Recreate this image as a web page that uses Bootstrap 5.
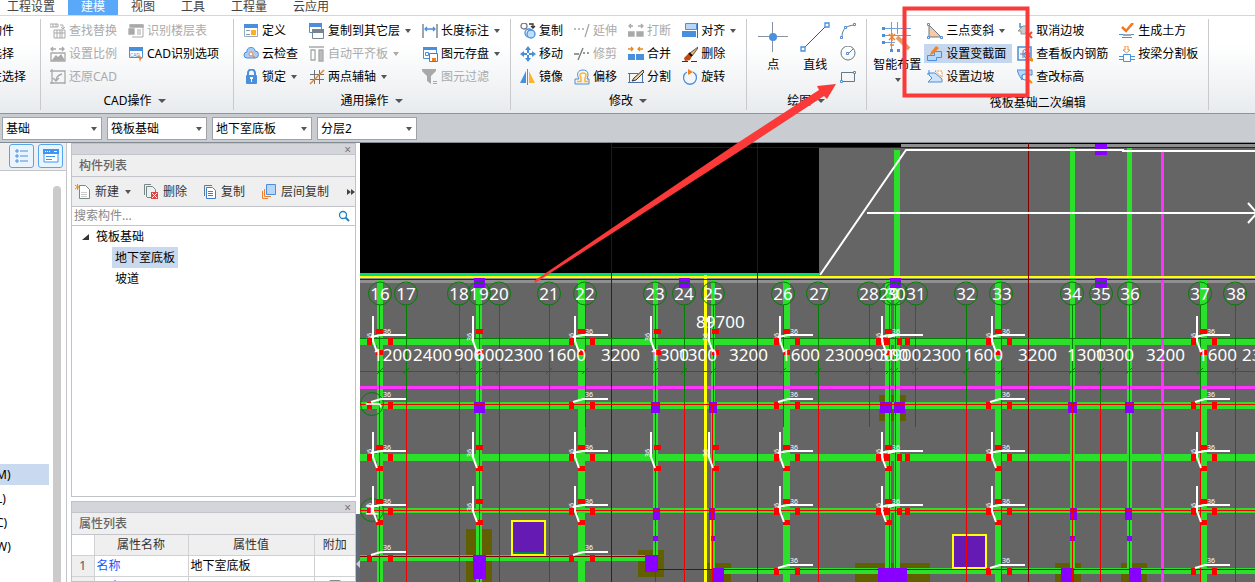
<!DOCTYPE html>
<html lang="zh-CN">
<head>
<meta charset="utf-8">
<meta name="viewport" content="width=device-width, initial-scale=1">
<title>建模</title>
<link href="https://cdn.jsdelivr.net/npm/bootstrap@5.3.0/dist/css/bootstrap.min.css" rel="stylesheet">
<script src="https://cdn.jsdelivr.net/npm/bootstrap@5.3.0/dist/js/bootstrap.bundle.min.js"></script>
<style>
body{font-family:"Noto Sans","Noto Sans CJK SC",sans-serif;font-size:12px;line-height:16px;color:#000;background:#fff;height:100vh;overflow:hidden}
button{font:inherit;color:inherit;background:none;border:0;padding:0;white-space:nowrap}
svg{display:block;flex:none}
.tabs{height:16px;margin:0;border-bottom:1px solid #d4d6d8;padding-left:0}
.tabs a{display:block;height:15px;line-height:13px;padding:0 13px;color:#444;text-decoration:none;white-space:nowrap}
.tabs a:first-child{margin-left:-6px}
.tabs a.on{background:#5aa9f8;color:#fff}
.ribbon{height:98px;background:linear-gradient(#fff 30%,#e8ebee);border-bottom:1px solid #8f959a;padding:3px 0}
.grp{border-right:1px solid #c8cacd;padding:0 10px 0 9px;flex:none}
.grp .cols{gap:11px;height:73px}
.cmd{display:flex;align-items:center;height:23px;gap:3px;text-align:left}
.cmd:disabled{color:#aaa}
.cmd.sel{background:#c5d7ef;height:19px;margin:2px 0;box-shadow:-3px 0 #c5d7ef,6px 0 #c5d7ef}
.car:after{content:"";display:inline-block;border:3px solid transparent;border-top:4px solid #555;border-bottom:0;margin-left:2px;vertical-align:2px;flex:none}
.cmd:disabled.car:after{border-top-color:#aaa}
.cap{text-align:center;line-height:17px;white-space:nowrap}
.cap.car:after{border-width:4px 4px 0;margin-left:6px}
.big{display:flex;flex-direction:column;align-items:center;height:70px;padding-top:3px;gap:5px}
.filters{height:29px;background:#c9cdd2;border-bottom:1px solid #858b92;padding:3px 2px;gap:5px}
.filters select{width:100px;height:23px;border:1px solid #9fa3a7;border-radius:0;font:inherit;padding:0 3px;appearance:none;color:#000;background:#fff url("data:image/svg+xml,%3Csvg xmlns='http://www.w3.org/2000/svg' width='6' height='4'%3E%3Cpath d='M0 0h6L3 4z' fill='%23555'/%3E%3C/svg%3E") no-repeat right 4px center}
.side{width:67px;flex:none;border-right:1px solid #c3c6cb;background:#fff}
.sidehead{height:28px;background:#efefef;border-bottom:1px solid #c3c6cb;padding:1px 0 0 9px;gap:4px}
.sidehead button{width:25px;height:24px;border:1px solid #55a5ee;border-radius:3px;background:#e9f4ff;display:grid;place-items:center}
.keys{width:49px;padding-top:293px}
.keys div{height:24px;line-height:22px;overflow:hidden}
.keys span{margin-left:-4px}
.keys .hl{height:21px;background:#c9daf0;margin-bottom:3px}
.sbar{width:8px;background:#cbcbcb;margin:15px 5px 0 4px;border-radius:4px 4px 0 0}
.panels{width:285px;flex:none;margin-left:4px}
.pnl{border:1px solid #c0c2ca;background:#fff}
.pnl.upper{flex:0 0 354px}
.pnl.lower{margin-top:4px}
.grip{height:11px;background:#d4d5db;border-bottom:1px solid #c3c5ca;text-align:right;padding-right:4px}
.grip button{display:block;margin-left:auto;line-height:9px;height:10px;color:#777}
.ttl{height:22px;line-height:21px;background:#efefef;border-bottom:1px solid #c3c5ca;padding-left:7px;color:#666;font-size:12px;font-weight:500;margin:0}
.tools{height:30px;background:#efefef;border-bottom:1px solid #c3c5ca;color:#333;padding-left:3px;gap:16px}
.tools .cmd{height:29px;gap:4px}
.tools .car{margin-right:-4px}
.find{height:19px;border-bottom:1px solid #c3c5ca;padding-right:5px}
.find input{border:0;outline:0;padding:0 2px;font:inherit;min-width:0}
.find input::placeholder{color:#888;opacity:1}
.tree{list-style:none;margin:0;padding:0 0 0 9px}
.tree ul{list-style:none;padding:0 0 0 31px;margin:0}
.tree li{line-height:21px}
.tree .pick{display:inline-block;padding:0 3px}
.tree .pick.hl{background:#c9daf0}
.props{width:100%;table-layout:fixed;border-collapse:collapse}
.props th{background:#efefef;border:1px solid #cfd1d4;border-top:0;height:20px;font-weight:400;text-align:center;padding:0;color:#333}
.props td{border:1px solid #cfd1d4;height:21px;padding:0 2px}
.props tr>:first-child{background:#efefef;text-align:center;color:#555;border-left:0}
.props tr>:last-child{border-right:0}
.props thead th:first-child{background:#fff}
.props td.key{color:#1455ff}
.props input{appearance:none;width:14px;height:14px;border:1px solid #888;border-radius:3px;display:block;margin:0 auto}
.gutter{width:4px;flex:none}
.gutter div{background:#5f6b76;margin-top:371px;height:100%}
.marks{position:absolute;left:0;top:0;pointer-events:none}
.i{fill:none;stroke:#4a8fdc;stroke-width:1.3}
.g{fill:none;stroke:#a9a9a9;stroke-width:1.3}
.ax{font-size:17px;fill:#fff}
.axc{text-anchor:middle}
.tiny{font-size:7px;fill:#fff}
.edge{width:41px;padding:0}
.edge div{margin-left:-10px}
#cad{padding-right:14px}
#draw .cols{gap:10px}
#draw .big:first-child{width:34px}
#raft{padding-left:6px}
#raft .cols{gap:11px}
#raft .big{margin-right:-5px}
#raft .big .car{line-height:4px}
#raft .cap{padding:2px 0 0 4px}
</style>
</head>
<body class="d-flex flex-column">
<nav class="tabs d-flex"><a href="#">工程设置</a><a href="#" class="on">建模</a><a href="#">视图</a><a href="#">工具</a><a href="#">工程量</a><a href="#">云应用</a></nav>

<div class="ribbon d-flex">
 <section class="grp edge"><div>
  <button class="cmd">构件</button><button class="cmd">选择</button><button class="cmd">性选择</button></div></section>

 <section class="grp" id="cad"><div class="cols d-flex">
  <div>
   <button class="cmd" disabled><svg width="16" height="16" class="g"><path d="M0 1h8v3H0zM3 1v3M6 1v3M10 2h3v3M11 4l2 2 2-2M4 7h11v8H4zM7 7v8M10 7v8M12 7v8M4 10h11" stroke-width="1"/></svg>查找替换</button>
   <button class="cmd" disabled><svg width="16" height="16" class="g"><path d="M1 3h5M9 3h5M3 1L1 3l2 2M12 1l2 2-2 2M1 7h14v8H1z"/><path fill="#a9a9a9" d="M3 14l3-4 2 2 3-3 3 5z"/></svg>设置比例</button>
   <button class="cmd" disabled><svg width="16" height="16" class="g"><path d="M2 0v15M0 2h15v13M0 14h15M3 9l3 3 3-3M6 12C6 8 8 6 12 5"/></svg>还原CAD</button>
  </div><div>
   <button class="cmd" disabled><svg width="16" height="16" class="g"><path d="M2 2h13v12H4M9 7h4M9 9h4M9 11h4" stroke-width="1"/><path d="M2 2h13v2H2zM1 6h5v5H1z" fill="#a9a9a9"/></svg>识别楼层表</button>
   <button class="cmd"><svg width="16" height="16"><path d="M1.500 2.500h13v9h-13z" fill="#fff" stroke="#4a8fdc"/><path d="M1 1h14v4H1z" fill="#4a8fdc"/><text x="2" y="11" font-size="5" fill="#4a8fdc">CAD</text><path d="M10 9l5 3-2 1-1 3z" fill="#f08040"/></svg>CAD识别选项</button>
  </div></div><div class="cap car">CAD操作</div></section>

 <section class="grp" id="gen"><div class="cols d-flex">
  <div>
   <button class="cmd"><svg width="16" height="16"><path d="M1.500 2.500h13v11h-13z" fill="#fff" stroke="#9ab"/><path d="M1 1h14v4H1z" fill="#4a8fdc"/><path d="M3 7.500h4M3 11.500h4" stroke="#89a"/><path d="M8 7h5v5H8z" fill="#ffb020"/></svg>定义</button>
   <button class="cmd"><svg width="16" height="16"><path d="M4 12a3 3 0 010-6 4 4 0 018-1 3.500 3.500 0 010 7z" fill="#a9cdf5" stroke="#4a8fdc"/><circle cx="8" cy="8" r="2" fill="#fff" stroke="#e88040"/><path d="M10 10l2 2" stroke="#e88040" stroke-width="1.500"/></svg>云检查</button>
   <button class="cmd car"><svg width="16" height="16"><path d="M5 7V4a3 3 0 017 0v3" fill="none" stroke="#4a8fdc" stroke-width="2"/><rect x="3" y="6" width="11" height="9" rx="1" fill="#4a8fdc"/><path d="M7 8h3v2H9v3H8v-3H7z" fill="#fff"/></svg>锁定</button>
  </div><div>
   <button class="cmd car"><svg width="16" height="16"><path d="M.500 1.500h12v8h-12z" fill="#fff" stroke="#4a8fdc"/><path d="M0 0h13v4H0z" fill="#4a8fdc"/><path d="M3.500 7.500h11v8h-11z" fill="#fff" stroke="#78848e"/><path d="M3 6h12v4H3z" fill="#78848e"/></svg>复制到其它层</button>
   <button class="cmd car" disabled><svg width="16" height="16" class="g"><path d="M0 1h15M2 4h4v10H2z"/><path d="M10 4h4v11h-4z" fill="#bbb"/></svg>自动平齐板</button>
   <button class="cmd car"><svg width="16" height="16" fill="none" stroke="#6b7680"><path d="M5.500 1v14M10.500 1v14M1 5.500h14M1 10.500h14"/><path d="M1 15L15 1" stroke="#f08020" stroke-width="1.500"/></svg>两点辅轴</button>
  </div><div>
   <button class="cmd car"><svg width="16" height="16" class="i"><path d="M1 1v14M15 1v14" stroke="#6b7680"/><path d="M3 6h10M5 4L3 6l2 2M11 4l2 2-2 2"/></svg>长度标注</button>
   <button class="cmd car"><svg width="16" height="16"><path d="M1.500 2.500h13v10h-13z" fill="#fff" stroke="#4a8fdc"/><path d="M1 1h14v3H1z" fill="#4a8fdc"/><path d="M3.500 6.500h3v3h-3z" fill="none" stroke="#4a8fdc"/><path d="M7.500 7.500h8v8h-8z" fill="#fff" stroke="#4a7fbc"/><path d="M10 12h4v3h-4z" fill="#f08020"/></svg>图元存盘</button>
   <button class="cmd" disabled><svg width="16" height="16"><path d="M0 0h14v2L9 7v8l-4-3V7L0 2zM11 12h4v1h-4zM11 14h4v1h-4z" fill="#a9a9a9"/></svg>图元过滤</button>
  </div></div><div class="cap car">通用操作</div></section>

 <section class="grp"><div class="cols d-flex">
  <div>
   <button class="cmd"><svg width="16" height="16" class="i"><circle cx="4" cy="3" r="3" stroke="#778"/><circle cx="9" cy="10" r="4"/><circle cx="11" cy="11" r="4" fill="#bfe0fa"/><path d="M9 1h4v3M11 3l2 2 2-2" stroke="#333"/></svg>复制</button>
   <button class="cmd"><svg width="16" height="16"><path d="M8 0l3 4H9v3H7V4H5zM8 16l3-4H9V9H7v3H5zM0 8l4-3v2h3v2H4v2zM16 8l-4-3v2H9v2h3v2z" fill="#4a8fdc"/></svg>移动</button>
   <button class="cmd"><svg width="16" height="16"><path d="M6 2v12H0z" fill="#4a8fdc"/><path d="M9 2v12h6z" fill="#ffb52a"/><path d="M7.500 0v16" stroke="#789"/></svg>镜像</button>
  </div><div>
   <button class="cmd" disabled><svg width="16" height="16" class="g"><path d="M0 6h2M4 6h2M8 6h2M15 1l-4 13"/></svg>延伸</button>
   <button class="cmd" disabled><svg width="16" height="16" class="g"><path d="M0 8h5M9 2L4 14M9 7h2M13 7h2" stroke="#777"/></svg>修剪</button>
   <button class="cmd"><svg width="16" height="16" class="i"><path d="M1 15v-5h4C2 5 4 1 9 1s6 4 4 9h2v5z" stroke-width="1"/><path d="M3 12.500h4V9C5 6 6 4 9 4s4 2 2 5v3.500h4" stroke="#ffb52a" stroke-width="1.500"/></svg>偏移</button>
  </div><div>
   <button class="cmd" disabled><svg width="16" height="16" class="g"><path d="M1 3h4M3 1L1 3l2 2M10 3h5M13 1l2 2-2 2"/><path d="M0 9h6v4H0zM9 9h6v4H9z" fill="#a9a9a9"/></svg>打断</button>
   <button class="cmd"><svg width="16" height="16"><path d="M0 3h5M3 1l2 2-2 2M15 3h-5M12 1l-2 2 2 2" fill="none" stroke="#e88820" stroke-width="1.300"/><path d="M0 8h7v6H0zM8 8h8v6H8z" fill="#4a8fdc"/></svg>合并</button>
   <button class="cmd"><svg width="16" height="16"><path d="M1.500 4v10M14.500 4v10M0 4.500h10M0 13.500h16" fill="none" stroke="#4a6fac"/><path d="M15 1L6 9l-2 3 4-1 8-8z" fill="#eed6a0" stroke="#333"/></svg>分割</button>
  </div><div>
   <button class="cmd car"><svg width="16" height="16"><path d="M3.500.500h11v6h-11z" fill="#b6d6fa" stroke="#4a8fdc"/><path d="M0 8h14v6H0z" fill="#4a8fdc"/><path d="M15.500 0v15" stroke="#567"/></svg>对齐</button>
   <button class="cmd"><svg width="16" height="16"><path d="M16 1L8 7l2 3 6-8z" fill="#d9b98a" stroke="#654"/><path d="M7 7l3 3-2 4-5 1-1-3z" fill="#c24a10"/><path d="M7 7l3 3" stroke="#111" stroke-width="2"/><path d="M0 15.500h6M9 15.500h6" stroke="#333"/></svg>删除</button>
   <button class="cmd"><svg width="16" height="16" class="i"><path d="M5 3a6.500 6.500 0 106 0"/><path d="M6 0l5 3-5 3z" fill="#f08020" stroke="none"/></svg>旋转</button>
  </div></div><div class="cap car">修改</div></section>

 <section class="grp" id="draw"><div class="cols d-flex">
   <button class="big"><svg width="30" height="30"><path d="M14.500 0v30M0 14.500h30" stroke="#8793a0"/><circle cx="15" cy="15" r="4" fill="#4a90e0"/></svg>点</button>
   <button class="big"><svg width="30" height="30"><path d="M3 27L27 3" stroke="#456"/><path d="M1 25h4v4H1zM25 1h4v4h-4z" fill="#fff" stroke="#4a8fdc" stroke-width="1.300"/></svg>直线</button>
   <div>
   <button class="cmd" aria-label="弧"><svg width="16" height="16"><path d="M2 14C2 6 6 3 14 2" fill="none" stroke="#678"/><path d="M.500 13.500h2v2h-2zM4.500 3.500h2v2h-2zM13.500.500h2v2h-2z" fill="#fff" stroke="#4a8fdc"/></svg></button>
   <button class="cmd" aria-label="圆"><svg width="16" height="16"><circle cx="8" cy="7" r="7" fill="none" stroke="#678"/><path d="M8 8l5-5" stroke="#678"/><path d="M6.500 6.500h2v2h-2z" fill="#fff" stroke="#4a8fdc"/></svg></button>
   <button class="cmd" aria-label="矩形"><svg width="16" height="16"><path d="M1.500 3.500h13v9h-13z" fill="none" stroke="#678"/><path d="M.500 11.500h2v2h-2zM13.500 2.500h2v2h-2z" fill="#fff" stroke="#4a8fdc"/></svg></button></div>
  </div><div class="cap car">绘图</div></section>

 <section class="grp" id="raft"><div class="cols d-flex">
  <button class="big"><svg width="30" height="30"><path d="M9.500 0v28M15.500 0v12M22.500 0v28M1 6.500h28M1 13.500h28M1 20.500h12" fill="none" stroke="#6f9fd8"/><path d="M0 5h3v3H0zM0 12h3v3H0zM0 19h3v3H0zM8 27h3v3H8zM15 27h3v3h-3z" fill="#4a8fdc"/><path d="M15 15l12 12" stroke="#dca070" stroke-width="4"/><path d="M7 12l6 6M13 12l-6 6M10 11v8M8 23h4M20 17h4" stroke="#f08030" stroke-width="1.500"/></svg><span>智能布置</span><span class="car"></span></button>
  <div>
   <button class="cmd car"><svg width="16" height="16"><path d="M2 2l12 12H2z" fill="#f9c9a4" stroke="#678"/><path d="M.500.500h2v2h-2zM.500 13.500h2v2h-2zM13.500 13.500h2v2h-2z" fill="#fff" stroke="#4a8fdc"/></svg>三点变斜</button>
   <button class="cmd sel"><svg width="16" height="16"><path d="M.500 9.500h7v-4h7v6h-5v3h-9z" fill="#b6d6fa" stroke="#4a8fdc"/><path d="M9 0l3 2-6 6-3 1 1-3z" fill="#f58220"/></svg>设置变截面</button>
   <button class="cmd"><svg width="16" height="16"><path d="M2 1v4H0M2 4h6l7 6v3H1l4-4-3-3z" fill="#cfe3fa" stroke="#4a8fdc"/><path d="M8 2l7 6V2z" fill="#fff" stroke="#f09030" stroke-dasharray="2 1"/></svg>设置边坡</button>
  </div><div>
   <button class="cmd"><svg width="16" height="16"><path d="M3 0v4h9" fill="none" stroke="#4a8fdc" stroke-width="1.500"/><path d="M1 8l5-5h5v8H4v-3z" fill="#ccc" stroke="#899"/><path d="M9 9l6 6M15 9l-6 6" stroke="#e05030" stroke-width="2"/></svg>取消边坡</button>
   <button class="cmd"><svg width="16" height="16"><path d="M1 1h13v13H1z" fill="#e8f3ff" stroke="#4a8fdc" stroke-width="1.500"/><path d="M3 8h6M6 12V6c0-3 3-3 3-1" fill="none" stroke="#778"/><circle cx="10" cy="9" r="3" fill="none" stroke="#4a8fdc"/><path d="M13 12l3 3" stroke="#f09000" stroke-width="3"/></svg>查看板内钢筋</button>
   <button class="cmd"><svg width="16" height="16"><path d="M0 1h15v5H5v5L2 6z" fill="#b6d6fa" stroke="#4a8fdc"/><circle cx="8" cy="8" r="3" fill="#e8f3ff" stroke="#4a8fdc"/><path d="M12 11l3 3" stroke="#f09000" stroke-width="2"/></svg>查改标高</button>
  </div><div>
   <button class="cmd"><svg width="16" height="16"><path d="M3 4l4 4 7-8" fill="none" stroke="#f07820" stroke-width="2.500"/><path d="M0 11.500h15M3 14.500h10" stroke="#4a8fdc"/><path d="M4 11h8v2H4z" fill="#9aa8b4"/></svg>生成土方</button>
   <button class="cmd"><svg width="16" height="16"><path d="M6 0h3v4h2L7.500 7 4 4h2z" fill="#fff" stroke="#f09030"/><path d="M4.500 8.500h7v7h-7zM0 10.500h4M0 13.500h4M12 10.500h4M12 13.500h4" fill="none" stroke="#4a8fdc"/></svg>按梁分割板</button>
  </div></div><div class="cap">筏板基础二次编辑</div></section>
</div>

<form class="filters d-flex">
 <select aria-label="类别"><option>基础</option></select><select aria-label="构件类型"><option>筏板基础</option></select><select aria-label="构件"><option>地下室底板</option></select><select aria-label="分层"><option>分层2</option></select>
</form>

<main class="d-flex flex-fill" style="min-height:0">
 <aside class="side d-flex flex-column">
  <div class="sidehead d-flex"><button aria-label="列表"><svg width="14" height="14" class="i"><path d="M1 1h2v2H1zM1 6h2v2H1zM1 11h2v2H1zM5 2h8M5 7h8M5 12h8" stroke-width="1"/></svg></button><button aria-label="图示"><svg width="16" height="14"><path d="M1 1h14v12H1z" fill="#fff" stroke="#3d97f2"/><path d="M0 0h16v5H0z" fill="#3d97f2"/><path d="M2 2.500h1M4 2.500h1M6 2.500h1M11 2.500h3" stroke="#fff"/><path d="M3 7.500h9M3 10.500h6" stroke="#3d97f2"/></svg></button></div>
  <div class="d-flex flex-fill"><div class="keys"><div class="hl"><span>M)</span></div><div><span>L)</span></div><div><span>C)</span></div><div><span>W)</span></div></div><div class="sbar"></div></div>
 </aside>

 <div class="panels d-flex flex-column">
  <section class="pnl upper d-flex flex-column">
   <div class="grip"><button aria-label="关闭">×</button></div>
   <h2 class="ttl">构件列表</h2>
   <div class="tools d-flex">
    <button class="cmd car"><svg width="16" height="16"><path d="M4.500 1.500h6l4 4v9h-10z" fill="#fff" stroke="#788"/><path d="M6 8.500h6M6 10.500h6M6 12.500h6" stroke="#ccc"/><path d="M0 1l5 4M5 1L0 5M2.500 0v6" stroke="#f09020"/></svg>新建</button>
    <button class="cmd"><svg width="16" height="16"><path d="M1.500 11V.500H8M3.500 13V2.500h6l3 3V9M4 13.500h4" fill="none" stroke="#788"/><path d="M8 8h7v7H8z" fill="#d84848"/><path d="M9 9l5 5M14 9l-5 5" stroke="#fff"/></svg>删除</button>
    <button class="cmd"><svg width="14" height="16"><path d="M1.500 12V1.500H9" fill="none" stroke="#678"/><path d="M3.500 3.500h6l3 3v8h-9z" fill="#fff" stroke="#3c80d0"/><path d="M5 7.500h5M5 9.500h5M5 11.500h5" stroke="#3c80d0"/></svg>复制</button>
    <button class="cmd"><svg width="16" height="16"><path d="M1.500 7v7.500H7M3.500 5v7.500H10" fill="none" stroke="#f08030"/><path d="M5.500 0.500h9v10h-9z" fill="#b6d6fa" stroke="#4a8fdc"/></svg>层间复制</button>
    <button class="cmd ms-auto" aria-label="更多"><svg width="8" height="8"><path d="M0 1l4 3-4 3zM4 1l4 3-4 3z" fill="#444"/></svg></button>
   </div>
   <div class="find d-flex align-items-center"><input class="flex-fill" type="search" aria-label="搜索构件" placeholder="搜索构件..."><svg width="12" height="12"><circle cx="5" cy="5" r="3.500" fill="none" stroke="#2080c0" stroke-width="1.300"/><path d="M7.500 7.500L11 11" stroke="#2080c0" stroke-width="2"/></svg></div>
   <ul class="tree"><li><span class="d-flex align-items-center" style="gap:7px"><svg width="8" height="8"><path d="M8 1v6H1z" fill="#333"/></svg>筏板基础</span>
    <ul><li><span class="pick hl">地下室底板</span></li><li><span class="pick">坡道</span></li></ul></li></ul>
  </section>
  <section class="pnl lower flex-fill overflow-hidden">
   <div class="grip"><button aria-label="关闭">×</button></div>
   <h2 class="ttl">属性列表</h2>
   <table class="props"><colgroup><col style="width:22px"><col style="width:94px"><col style="width:126px"><col></colgroup>
    <thead><tr><th></th><th>属性名称</th><th>属性值</th><th>附加</th></tr></thead>
    <tbody><tr><td>1</td><td class="key">名称</td><td>地下室底板</td><td></td></tr><tr><td>2</td><td class="key">厚度</td><td></td><td><input type="checkbox" aria-label="附加"></td></tr></tbody></table>
  </section>
 </div>
 <div class="gutter overflow-hidden"><div><svg width="4" height="68"><path d="M4 46v8l-4-4z" fill="#c8ced4"/></svg></div></div>

 <div class="flex-fill" style="min-width:0">
 <svg width="100%" height="100%" viewBox="360 143 895 439" preserveAspectRatio="xMinYMin slice">
  <defs>
   <circle id="bub" cy="293.500" r="11.500" fill="none" stroke="#007f00"/>
   <g id="lr"><path d="M-6 0h5v7h-5zM15 0h5v7h-5z" fill="#f00"/></g>
   <g id="half"><use href="#lr"/><path d="M-2 0L8-3H33" fill="none" stroke="#fff" stroke-width="2"/><text class="tiny" x="10" y="-5">36</text></g>
   <g id="slim"><path d="M3-9h7v5H3zM3 12h7v5H3z" fill="#f00"/><path d="M0-22V3L4 14" fill="none" stroke="#fff" stroke-width="2"/><text class="tiny" transform="translate(-1 3)rotate(-90)">36</text></g>
   <g id="full"><use href="#slim"/><use href="#lr"/><path d="M-2-1L8-3H33" fill="none" stroke="#fff" stroke-width="2"/><text class="tiny" x="10" y="-4">36</text></g>
   <path id="tk" d="M-3 374l6-6" stroke="#007f00"/>
  </defs>
  <path d="M360 143h895v439H360z" fill="#656565"/>
  <path d="M360 143h459v130H360zM360 143h541v5H360zM901 143h354v1H901z"/>
  <path d="M901 144h354v4H901zM360 278h895v5H360z" fill="#8f8f8f"/>
  <path d="M466 529h26v53h-26zM638 550h26v27h-26zM707 563h24v19h-24zM855 563h75v19h-75zM1055 563h26v19h-26zM1121 563h26v19h-26zM879 395h27v26h-27z" fill="#625f00"/>
  <g fill="#2be02b">
   <path d="M377 280h6v302h-6zM476 280h6v302h-6zM578 280h7v302h-7zM653 280h5v275h-5zM711 280h4v290h-4zM783 280h7v302h-7zM885 280h6v290h-6zM894 150h6v420h-6zM995 280h6v302h-6zM1070 148h5v422h-5zM1127 148h5v422h-5zM1200 280h7v302h-7z"/>
   <path d="M360 338h895v7H360zM360 402h895v7H360zM360 454h895v7H360zM360 508h895v5H360zM360 555h288v6H360zM715 568h540v6H715z"/>
  </g>
  <path d="M360 386h895v3H360zM1161 150h3v432h-3z" fill="#ff32ff"/>
  <path d="M360 273h459v3H360z" fill="#00dc78"/>
  <path d="M360 276h895v2H360zM704 275h3v307h-3zM710 520h1v50h-1z" fill="#ff0"/>
  <g fill="none" stroke="#800000"><path d="M819 147.500h436M360 279.500h895M360 556.500h295M656 569.500h599M611.500 273v309M757.500 273v309M1028.500 143v439"/><path d="M611 147.500h208M611.500 143v130M757.500 143v130" stroke="#480808"/></g>
  <path d="M474 278h11v10h-11zM679 278h11v10h-11zM890 278h11v10h-11zM1095 278h12v10h-12zM1095 144h12v11h-12zM474 402h11v11h-11zM651 402h9v11h-9zM709 402h8v11h-8zM880 402h12v11h-12zM894 402h11v11h-11zM1068 402h9v11h-9zM1125 402h9v11h-9zM653 508h7v12h-7zM709 508h6v12h-6zM1070 508h7v12h-7zM1125 508h7v12h-7zM653 536h5v5h-5zM711 536h4v5h-4zM1070 536h5v5h-5zM1127 536h5v5h-5zM473 555h13v24h-13zM645 555h13v17h-13zM713 568h11v14h-11zM878 568h29v14h-29zM1061 568h13v14h-13zM1130 568h11v14h-11z" fill="#80f"/>
  <path d="M512 521h33v34h-33zM953 535h33v33h-33z" fill="#651ab4" stroke="#ff0" stroke-width="2"/>
  <path d="M513 552h31v2h-31z" fill="#008060"/>
  <g fill="none" stroke="#007f00">
   <path d="M360 338.500h895M360 371.500h895M379.500 305v99M406.500 305v99M459.500 305v99M479.500 305v99M499.500 305v99M549.500 305v99M585.500 305v99M655.500 305v99M684.500 305v99M713.500 305v99M783.500 305v99M818.500 305v99M869.500 305v99M889.500 305v99M895.500 305v99M915.500 305v99M966.500 305v99M1001.500 305v99M1072.500 305v99M1100.500 305v99M1129.500 305v99M1200.500 305v99M1235.500 305v99"/>
   <circle cx="372" cy="404" r="11.500"/><circle cx="372" cy="510" r="11.500"/>
  </g>
  <path fill="none" stroke="#f00000" d="M360 404.500h895M360 510.500h895M379.500 404v178M406.500 404v178M459.500 404v178M479.500 404v178M499.500 404v178M549.500 404v178M585.500 404v23M655.500 404v178M684.500 404v178M712.500 404v178M783.500 404v23M818.500 404v178M869.500 404v23M889.500 404v178M895.500 404v178M915.500 404v23M966.500 404v178M1001.500 404v178M1072.500 404v178M1100.500 404v178M1129.500 404v178M1200.500 404v178M1235.500 404v178"/>
  <g><use href="#bub" x="380"/><use href="#bub" x="406"/><use href="#bub" x="459"/><use href="#bub" x="479"/><use href="#bub" x="499"/><use href="#bub" x="549"/><use href="#bub" x="585"/><use href="#bub" x="655"/><use href="#bub" x="684"/><use href="#bub" x="713"/><use href="#bub" x="783"/><use href="#bub" x="818"/><use href="#bub" x="869"/><use href="#bub" x="891"/><use href="#bub" x="896"/><use href="#bub" x="916"/><use href="#bub" x="966"/><use href="#bub" x="1001"/><use href="#bub" x="1072"/><use href="#bub" x="1101"/><use href="#bub" x="1129"/><use href="#bub" x="1200"/><use href="#bub" x="1235"/></g>
  <g><use href="#tk" x="380"/><use href="#tk" x="406"/><use href="#tk" x="459"/><use href="#tk" x="479"/><use href="#tk" x="499"/><use href="#tk" x="549"/><use href="#tk" x="585"/><use href="#tk" x="655"/><use href="#tk" x="684"/><use href="#tk" x="713"/><use href="#tk" x="783"/><use href="#tk" x="818"/><use href="#tk" x="869"/><use href="#tk" x="889"/><use href="#tk" x="895"/><use href="#tk" x="915"/><use href="#tk" x="966"/><use href="#tk" x="1001"/><use href="#tk" x="1072"/><use href="#tk" x="1101"/><use href="#tk" x="1129"/><use href="#tk" x="1200"/><use href="#tk" x="1235"/></g>
  <g id="row"><use href="#full" x="373" y="338"/><use href="#slim" x="473" y="338"/><use href="#full" x="575" y="338"/><use href="#full" x="780" y="338"/><use href="#full" x="882" y="338"/><use href="#lr" x="890" y="338"/><path d="M888 337L897 335H923" fill="none" stroke="#fff" stroke-width="2"/><use href="#full" x="992" y="338"/><use href="#full" x="1197" y="338"/></g>
  <use href="#row" y="116"/><use href="#row" y="170"/>
  <g><use href="#slim" x="651" y="338"/><use href="#slim" x="709" y="338"/><use href="#slim" x="651" y="454"/><use href="#slim" x="709" y="454"/></g>
  <g><use href="#half" x="373" y="402"/><use href="#half" x="575" y="402"/><use href="#half" x="780" y="402"/><use href="#half" x="992" y="402"/><use href="#half" x="1197" y="402"/><use href="#half" x="373" y="555"/><use href="#half" x="575" y="555"/><use href="#half" x="780" y="568"/><use href="#half" x="992" y="568"/><use href="#half" x="1197" y="568"/></g>
  <path d="M820 275L906 150H1123V151H1255M867 213H1255M1248 203L1257 213 1248 223" fill="none" stroke="#fff" stroke-width="2"/>
  <g class="ax axc"><text x="380" y="300">16</text><text x="406" y="300">17</text><text x="459" y="300">18</text><text x="479" y="300">19</text><text x="499" y="300">20</text><text x="549" y="300">21</text><text x="585" y="300">22</text><text x="655" y="300">23</text><text x="684" y="300">24</text><text x="713" y="300">25</text><text x="783" y="300">26</text><text x="819" y="300">27</text><text x="869" y="300">28</text><text x="889" y="300">29</text><text x="896" y="300">30</text><text x="916" y="300">31</text><text x="966" y="300">32</text><text x="1002" y="300">33</text><text x="1072" y="300">34</text><text x="1101" y="300">35</text><text x="1130" y="300">36</text><text x="1200" y="300">37</text><text x="1236" y="300">38</text><text transform="translate(378 404)rotate(-90)">J</text><text transform="translate(378 510)rotate(-90)">H</text></g>
  <g class="ax"><text x="696" y="328">89700</text><text x="373" y="361">1200</text><text x="413" y="361">2400</text><text x="454" y="361">900</text><text x="475" y="361">600</text><text x="504" y="361">2300</text><text x="547" y="361">1600</text><text x="601" y="361">3200</text><text x="650" y="361">1300</text><text x="678" y="361">1300</text><text x="729" y="361">3200</text><text x="781" y="361">1600</text><text x="825" y="361">2300</text><text x="864" y="361">900</text><text x="879" y="361">300</text><text x="892" y="361">900</text><text x="922" y="361">2300</text><text x="964" y="361">1600</text><text x="1018" y="361">3200</text><text x="1067" y="361">1300</text><text x="1095" y="361">1300</text><text x="1146" y="361">3200</text><text x="1198" y="361">1600</text><text x="1242" y="361">2300</text></g>
 </svg></div>
</main>

<svg class="marks" width="1060" height="290"><path d="M904.500 8.500h123v87h-123z" fill="none" stroke="#fb3938" stroke-width="4"/><path d="M534 281L739 142 819 90 817 86 836 84 827 99 824 96 746 147 535 283z" fill="#fb3938"/></svg>
</body>
</html>
